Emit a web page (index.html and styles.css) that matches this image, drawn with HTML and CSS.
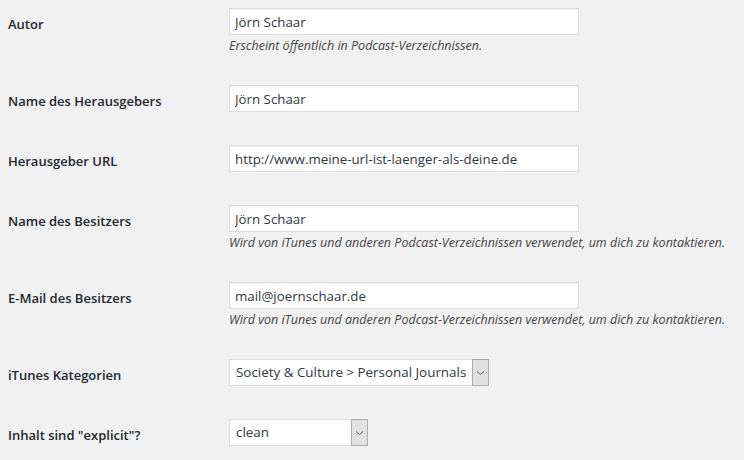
FILE: index.html
```html
<!DOCTYPE html>
<html lang="de">
<head>
<meta charset="utf-8">
<title>Podcast-Einstellungen</title>
<link rel="stylesheet" href="styles.css">
</head>
<body>
<form class="form-table">
  <div class="row">
    <label class="label" for="author">Autor</label>
    <div class="field">
      <input class="text-input" id="author" type="text" value="Jörn Schaar">
      <p class="description">Erscheint öffentlich in Podcast-Verzeichnissen.</p>
    </div>
  </div>
  <div class="row">
    <label class="label" for="publisher">Name des Herausgebers</label>
    <div class="field">
      <input class="text-input" id="publisher" type="text" value="Jörn Schaar">
    </div>
  </div>
  <div class="row">
    <label class="label" for="publisher-url">Herausgeber URL</label>
    <div class="field">
      <input class="text-input" id="publisher-url" type="text" value="http://www.meine-url-ist-laenger-als-deine.de">
    </div>
  </div>
  <div class="row">
    <label class="label" for="owner">Name des Besitzers</label>
    <div class="field">
      <input class="text-input" id="owner" type="text" value="Jörn Schaar">
      <p class="description">Wird von iTunes und anderen Podcast-Verzeichnissen verwendet, um dich zu kontaktieren.</p>
    </div>
  </div>
  <div class="row">
    <label class="label" for="owner-mail">E-Mail des Besitzers</label>
    <div class="field">
      <input class="text-input" id="owner-mail" type="text" value="mail@joernschaar.de">
      <p class="description">Wird von iTunes und anderen Podcast-Verzeichnissen verwendet, um dich zu kontaktieren.</p>
    </div>
  </div>
  <div class="row">
    <span class="label">iTunes Kategorien</span>
    <div class="field">
      <div class="select select-wide">
        <span class="select-value">Society &amp; Culture &gt; Personal Journals</span>
        <span class="select-button">
          <svg width="9" height="6" viewBox="0 0 9 6"><path d="M1 1.5 L4.5 4.5 L8 1.5" fill="none" stroke="#606060" stroke-width="1"/></svg>
        </span>
      </div>
    </div>
  </div>
  <div class="row">
    <span class="label">Inhalt sind "explicit"?</span>
    <div class="field">
      <div class="select select-narrow">
        <span class="select-value">clean</span>
        <span class="select-button">
          <svg width="9" height="6" viewBox="0 0 9 6"><path d="M1 1.5 L4.5 4.5 L8 1.5" fill="none" stroke="#606060" stroke-width="1"/></svg>
        </span>
      </div>
    </div>
  </div>
</form>
</body>
</html>
```
FILE: styles.css
```css
html, body {
  margin: 0;
  padding: 0;
  background: #f1f1f1;
}

body {
  font-family: "Open Sans", "Noto Sans", sans-serif;
  color: #23282d;
  font-size: 13px;
}

.form-table {
  padding-left: 8px;
}

.row {
  display: grid;
  grid-template-columns: 221px 1fr;
  padding: 15px 0 16px;
}

.row:first-child {
  padding-top: 7px;
}

.label {
  font-weight: 600;
  font-size: 13px;
  line-height: 18px;
  padding-top: 8px;
  color: #23282d;
}

.field {
  display: flex;
  flex-direction: column;
  align-items: flex-start;
}

.text-input {
  box-sizing: border-box;
  width: 350px;
  height: 27px;
  margin: 1px 0;
  padding: 0 5px;
  border: 1px solid #dddddd;
  background: #ffffff;
  box-shadow: inset 0 1px 2px rgba(0, 0, 0, 0.07);
  font-family: inherit;
  font-size: 13.3px;
  color: #32373c;
  outline: none;
}

.description {
  margin: 2px 0 0;
  font-size: 12.5px;
  line-height: 15px;
  font-style: italic;
  color: #444;
}

.select {
  box-sizing: border-box;
  display: flex;
  height: 27px;
  margin: 1px 0;
  border: 1px solid #dddddd;
  background: #ffffff;
}

.select-wide { width: 260px; }
.select-narrow { width: 139px; }

.select-value {
  flex: 1;
  padding-left: 6px;
  font-size: 13.4px;
  line-height: 25px;
  color: #32373c;
  white-space: nowrap;
  overflow: hidden;
}

.select-button {
  box-sizing: border-box;
  width: 17px;
  margin: -1px -1px -1px 0;
  border: 1px solid #adadad;
  background: #e1e1e1;
  display: flex;
  align-items: center;
  justify-content: center;
}
```
